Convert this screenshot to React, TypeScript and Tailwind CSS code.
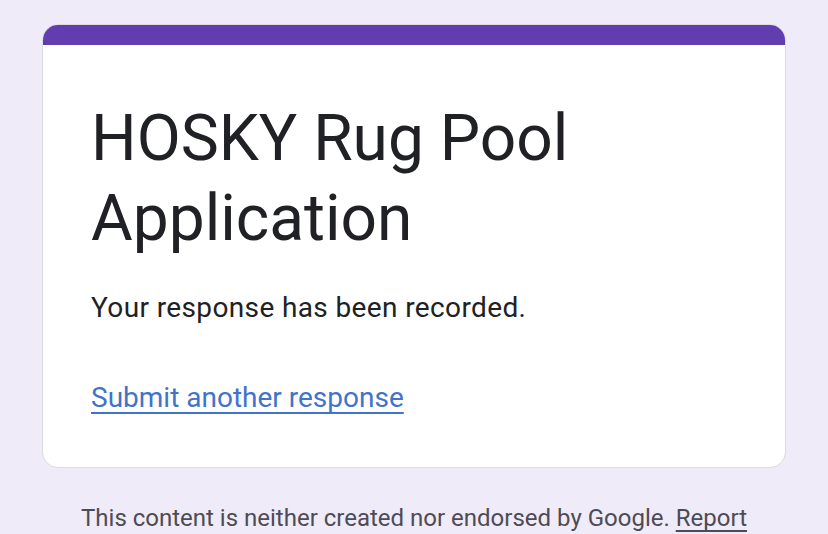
import React from "react";

export default function App() {
  return (
    <div
      className="min-h-[534px] w-full bg-[#f0ebf8] pt-6 overflow-hidden"
      style={{ fontFamily: "Roboto, 'Noto Sans', sans-serif" }}
    >
      <div className="mx-[42px] rounded-[16px] bg-white border border-[#dadce0] overflow-hidden">
        <div className="h-[20px] bg-[#623db0]" />
        <div className="px-[48px] pt-[54px] pb-[51px]">
          <h1 className="text-[64px] leading-[80px] text-[#202124] font-normal">
            HOSKY Rug Pool Application
          </h1>
          <p className="mt-[31px] text-[28px] leading-[36px] tracking-[0.375px] text-[#202124]">
            Your response has been recorded.
          </p>
          <a
            href="#"
            className="block mt-[54px] text-[28px] leading-[36px] text-[#4273c8] underline underline-offset-[5px] [text-decoration-skip-ink:none]"
          >
            Submit another response
          </a>
        </div>
      </div>
      <div className="mt-[34px] text-center text-[24px] leading-[32px] text-[#4d4b55]">
        This content is neither created nor endorsed by Google.{" "}
        <span className="underline underline-offset-[4px] [text-decoration-skip-ink:none]">Report</span>
      </div>
    </div>
  );
}
